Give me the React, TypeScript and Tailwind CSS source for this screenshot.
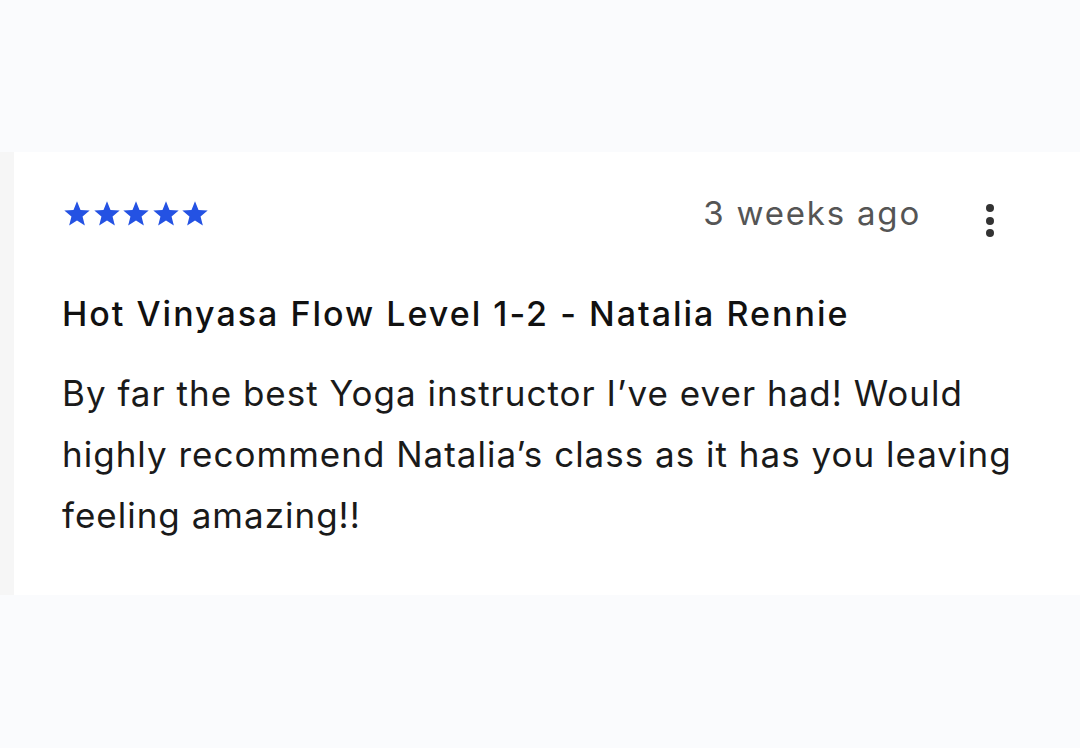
import React from "react";

const Star = () => (
  <svg width="30" height="29" viewBox="0 0 24 24" className="block">
    <path d="M12 1.8l2.9 7.2 7.6.5-5.9 4.9 1.9 7.5L12 17.7 5.5 21.9l1.9-7.5L1.5 9.5l7.6-.5z" fill="#2452e3" />
  </svg>
);

export default function App() {
  return (
    <div className="w-[1080px] h-[748px] bg-[#fafbfd] flex flex-col" style={{ fontFamily: "Inter, 'Noto Sans', sans-serif" }}>
      <div className="h-[152px]" />
      <div className="h-[443px] flex bg-white">
        <div className="w-[14px] bg-[#f6f6f6]" />
        <div className="flex-1 pl-[48px] pr-[50px] pt-[38px]">
          <div className="flex items-center pr-[36px]">
            <div className="flex -space-x-[0.5px]">
              <Star /><Star /><Star /><Star /><Star />
            </div>
            <div className="ml-auto text-[33px] text-[#555555] leading-none mr-[65px] tracking-[1.8px]">3 weeks ago</div>
            <div className="flex flex-col gap-[4.5px] mt-[14px]">
              <span className="w-[8px] h-[8px] rounded-full bg-[#333]" />
              <span className="w-[8px] h-[8px] rounded-full bg-[#333]" />
              <span className="w-[8px] h-[8px] rounded-full bg-[#333]" />
            </div>
          </div>
          <div className="mt-[60px] text-[34px] font-medium text-[#111] leading-none tracking-[2px]">Hot Vinyasa Flow Level 1-2 - Natalia Rennie</div>
          <div className="mt-[32px] text-[35px] text-[#1a1a1a] leading-[61px] tracking-[1px]">
            By far the best Yoga instructor I’ve ever had! Would highly recommend Natalia’s class as it has you leaving feeling amazing!!
          </div>
        </div>
      </div>
    </div>
  );
}
